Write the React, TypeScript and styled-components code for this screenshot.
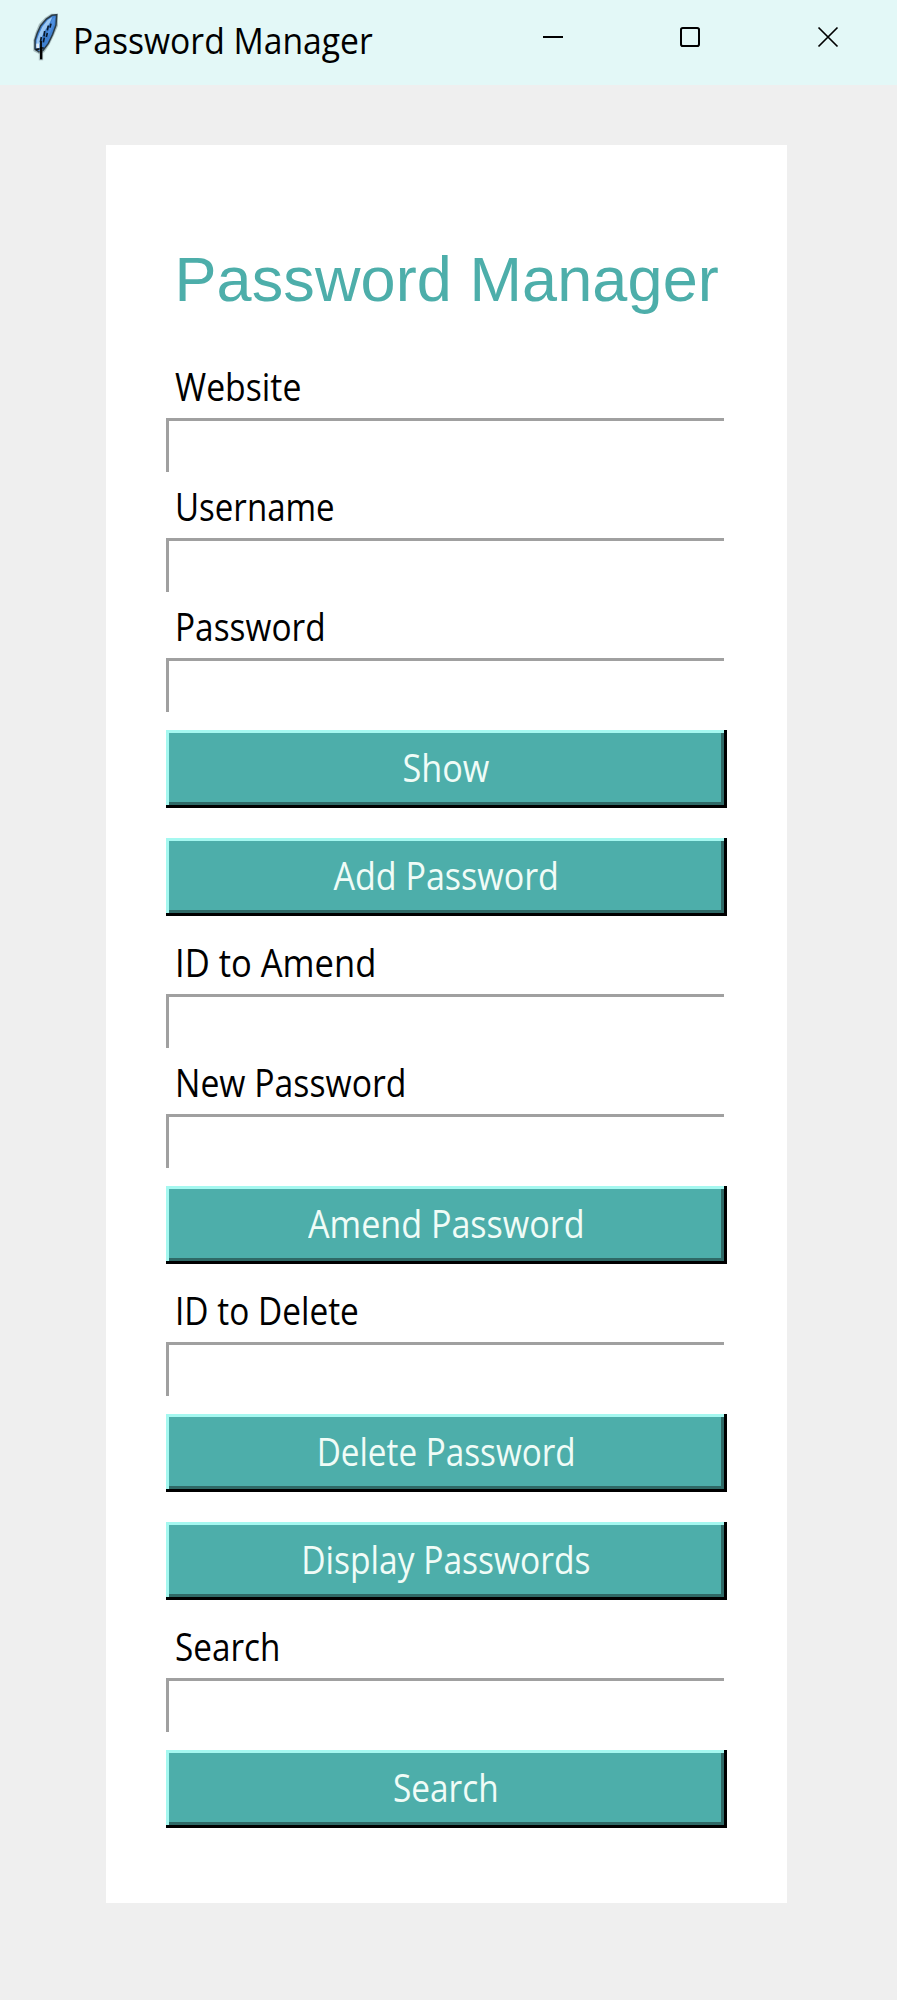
import React from "react";
import styled, { createGlobalStyle } from "styled-components";

const GlobalStyle = createGlobalStyle`
  * { box-sizing: border-box; }
  html, body { margin: 0; padding: 0; background: #efefef; }
`;

const Window = styled.div`
  display: flex;
  flex-direction: column;
  width: 897px;
  height: 2000px;
  overflow: hidden;
  background: #efefef;
  font-family: "Open Sans", "Noto Sans", sans-serif;
  font-size: 37.8px;
  color: #000;
`;

const TitleBar = styled.header`
  display: flex;
  align-items: flex-start;
  width: 100%;
  height: 85px;
  padding-left: 32px;
  background: #e3f8f7;
`;

const Feather = styled.svg`
  flex: none;
  width: 27px;
  height: 48px;
  margin-top: 13px;
`;

const WindowTitle = styled.div`
  flex: 1;
  padding-left: 14px;
  font-size: 36.4px;
  line-height: 80px;
`;

const WindowControls = styled.div`
  display: flex;
  gap: 116px;
  padding: 26px 58px 0 0;
`;

const ControlIcon = styled.svg`
  display: block;
  width: 22px;
  height: 22px;
  fill: none;
  stroke: #000;
  stroke-width: 2;
`;

const Panel = styled.main`
  display: flex;
  flex-direction: column;
  width: 681px;
  height: 1758px;
  margin: 60px 0 0 106px;
  padding: 60px;
  background: #fff;
`;

const Heading = styled.h1`
  height: 150px;
  margin: 0;
  padding-left: 8.5px;
  font: 400 63px/148px "Liberation Sans", Arial, sans-serif;
  letter-spacing: 0.1px;
  white-space: nowrap;
  color: #4daeaa;
`;

const Fitted = styled.span<{ $fit: number; $origin?: string }>`
  display: inline-block;
  white-space: nowrap;
  transform: scaleX(${(p) => p.$fit});
  transform-origin: ${(p) => p.$origin ?? "left"} center;
`;

const Label = styled.label`
  height: 63px;
  padding-left: 9px;
  line-height: 63px;
`;

const Entry = styled.input`
  width: 561px;
  height: 57px;
  margin: 0;
  padding: 0 9px;
  border: 0;
  outline: 0;
  border-radius: 0;
  background: #fff;
  box-shadow: inset -3px -3px 0 #fff, inset 3px 3px 0 #a0a0a0;
  font: inherit;
`;

const Action = styled.button`
  display: flex;
  justify-content: center;
  align-items: flex-start;
  width: 561px;
  height: 78px;
  margin: 15px 0;
  padding: 3px 1px 0 0;
  border: 0;
  border-radius: 0;
  background: #4daeaa;
  box-shadow: inset -3px -3px 0 #000, inset 3px 3px 0 #a5f8f0,
    inset -6px -6px 0 #2f6966;
  font: inherit;
  line-height: 69px;
  color: #f0fcf7;
`;

function Field({ label, fit }: { label: string; fit: number }) {
  return (
    <>
      <Label>
        <Fitted $fit={fit}>{label}</Fitted>
      </Label>
      <Entry aria-label={label} />
    </>
  );
}

function ActionButton({ text, fit }: { text: string; fit: number }) {
  return (
    <Action type="button">
      <Fitted $fit={fit} $origin="center">
        {text}
      </Fitted>
    </Action>
  );
}

function FeatherIcon() {
  return (
    <Feather viewBox="37 24 81 144">
      <path
        d="M115 26 L94 26 L76 38 L58 57 L47 84 L41 106 L41 138 L58 147 L74 142 L90 118 L103 91 L115 62 Z"
        fill="#6f8488"
        opacity="0.5"
      />
      <path
        d="M111 29 L97 31 L80 42 L63 62 L53 84 L46 105 L46 132 L58 141 L70 136 L86 115 L99 88 L109 60 Z"
        fill="#3f80d0"
        stroke="#2b3b45"
        strokeWidth="4.5"
      />
      <path
        d="M98 36 L84 45 L68 65 L58 87 L51 106 L50 126 L60 116 L66 96 L76 76 L90 54 Z"
        fill="#9cc8f3"
      />
      <path d="M98 42 L107 35 L103 58 L92 82 L80 100 L88 70 Z" fill="#4e8fe0" />
      <path
        d="M94 56 L91 68 M86 62 L83 76 M75 78 L73 94 M65 96 L62 112 M83 84 L80 96 M74 98 L71 112"
        fill="none"
        stroke="#0b1a2c"
        strokeWidth="5"
      />
      <path d="M50 116 h9 v14 h-9 z" fill="#e4eef4" />
      <path d="M64 108 V128" stroke="#0a0f14" strokeWidth="6" />
      <path d="M48 134 L64 131 L72 128" fill="none" stroke="#0a0f14" strokeWidth="5" />
      <path d="M64 128 V166" stroke="#75878b" strokeWidth="13" opacity="0.45" />
      <path d="M64.5 126 V163" stroke="#000" strokeWidth="7" />
    </Feather>
  );
}

export default function App() {
  return (
    <>
      <GlobalStyle />
      <Window>
        <TitleBar>
          <FeatherIcon />
          <WindowTitle>
            <Fitted $fit={0.925}>Password Manager</Fitted>
          </WindowTitle>
          <WindowControls>
            <ControlIcon viewBox="0 0 22 22">
              <path d="M2 11H22" />
            </ControlIcon>
            <ControlIcon viewBox="0 0 22 22">
              <rect x="2" y="2" width="18" height="18" rx="1.8" />
            </ControlIcon>
            <ControlIcon viewBox="0 0 22 22">
              <path d="M1.5 1.5L20.5 20.5M20.5 1.5L1.5 20.5" strokeWidth="1.7" />
            </ControlIcon>
          </WindowControls>
        </TitleBar>
        <Panel>
          <Heading>Password Manager</Heading>
          <Field label="Website" fit={0.893} />
          <Field label="Username" fit={0.874} />
          <Field label="Password" fit={0.884} />
          <ActionButton text="Show" fit={0.905} />
          <ActionButton text="Add Password" fit={0.901} />
          <Field label="ID to Amend" fit={0.914} />
          <Field label="New Password" fit={0.893} />
          <ActionButton text="Amend Password" fit={0.902} />
          <Field label="ID to Delete" fit={0.884} />
          <ActionButton text="Delete Password" fit={0.88} />
          <ActionButton text="Display Passwords" fit={0.888} />
          <Field label="Search" fit={0.88} />
          <ActionButton text="Search" fit={0.882} />
        </Panel>
      </Window>
    </>
  );
}
